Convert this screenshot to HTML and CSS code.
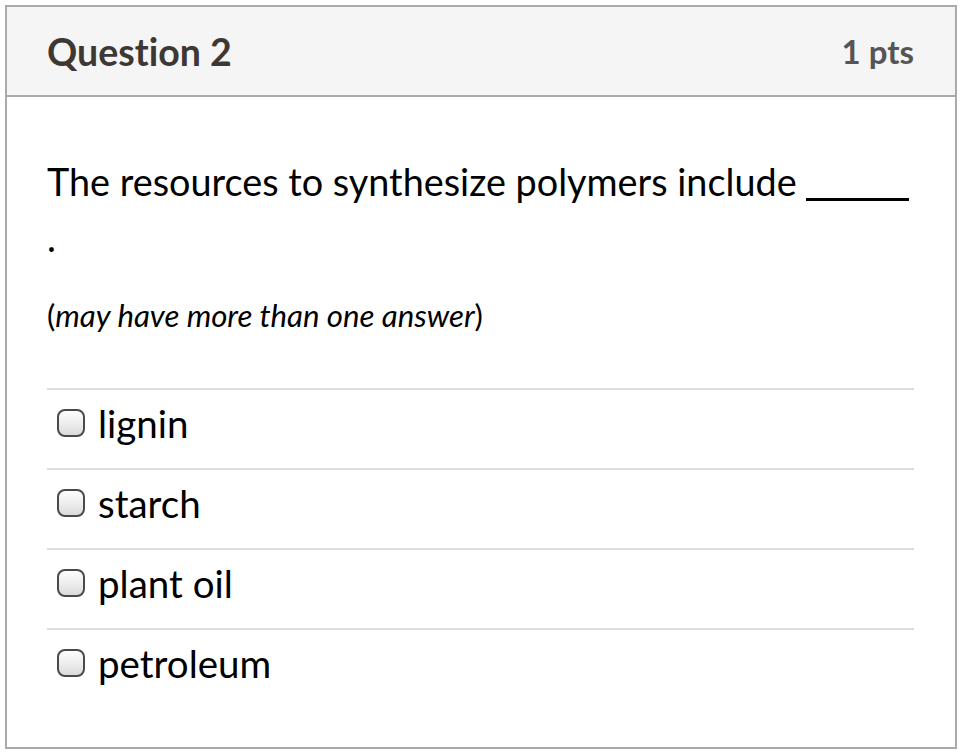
FILE: index.html
```html
<!DOCTYPE html>
<html>
<head>
<meta charset="utf-8">
<link rel="stylesheet" href="styles.css">
</head>
<body>
<div class="question">
  <div class="question-header">
    <h2 class="question-name">Question 2</h2>
    <span class="points">1 pts</span>
  </div>
  <div class="question-body">
    <div class="question-text">
      <p class="prompt">The resources to synthesize polymers include <span class="blank"></span><br>.</p>
      <p class="hint">(<em>may have more than one answer</em>)</p>
    </div>
    <div class="answers">
      <label class="answer"><span class="checkbox"></span><span class="answer-label">lignin</span></label>
      <label class="answer"><span class="checkbox"></span><span class="answer-label">starch</span></label>
      <label class="answer"><span class="checkbox"></span><span class="answer-label">plant oil</span></label>
      <label class="answer"><span class="checkbox"></span><span class="answer-label">petroleum</span></label>
    </div>
  </div>
</div>
</body>
</html>
```
FILE: styles.css
```css
html, body {
  margin: 0;
  padding: 0;
  background: #ffffff;
}
body {
  font-family: Lato, "Open Sans", sans-serif;
  color: #000;
  font-variant-ligatures: no-common-ligatures;
}
.question {
  margin: 5px 0 0 5px;
  width: 952px;
  height: 744px;
  box-sizing: border-box;
  border: 2px solid #aaaaaa;
  display: flex;
  flex-direction: column;
}
.question-header {
  height: 90px;
  box-sizing: border-box;
  background: #f5f5f5;
  border-bottom: 2px solid #aaaaaa;
  display: flex;
  align-items: center;
  justify-content: space-between;
  padding: 0 41px 0 40px;
}
.question-name {
  margin: 0;
  font-size: 37.5px;
  font-weight: 700;
  color: #3d3834;
}
.points {
  font-size: 33px;
  font-weight: 700;
  color: #555555;
}
.question-body {
  padding: 0 41px 0 40px;
}
.question-text {
  padding-top: 57px;
}
.prompt {
  margin: 0;
  font-size: 37.8px;
  line-height: 56px;
}
.blank {
  display: inline-block;
  width: 103px;
  height: 0;
  border-bottom: 3px solid #000;
  vertical-align: -5px;
}
.hint {
  margin: 29px 0 0 0;
  font-size: 31.2px;
  line-height: 40px;
}
.answers {
  margin-top: 53px;
  display: flex;
  flex-direction: column;
}
.answer {
  border-top: 2px solid #dddddd;
  height: 80px;
  box-sizing: border-box;
  display: flex;
  align-items: center;
  padding: 0 0 12px 10px;
  gap: 13px;
}
.checkbox {
  width: 28px;
  height: 28px;
  box-sizing: border-box;
  border: 2.5px solid #4a4a4a;
  border-radius: 8px;
  background: linear-gradient(#ffffff, #dcdcdc);
}
.answer-label {
  font-size: 38.5px;
}
```
